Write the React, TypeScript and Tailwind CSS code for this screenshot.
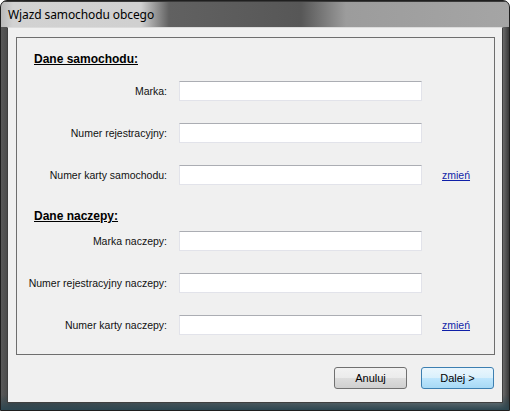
import React from 'react';

const font = "font-['Liberation_Sans',Arial,sans-serif]";

function Field({ label, link }: { label: string; link?: boolean }) {
    return (
        <div className="flex items-center h-[20px]">
            <div className="w-[150px] text-right text-[10.5px] text-[#111] leading-none whitespace-nowrap">{label}</div>
            <div className="ml-[12px] w-[243px] h-[20px] bg-white border border-[#e2e3ea] border-t-[#abadb3]" />
            {link && (
                <a href="#" className="ml-[20px] text-[10.5px] leading-none text-[#0f1fa8] underline">zmień</a>
            )}
        </div>
    );
}

export default function App() {
    return (
        <div className={`w-[510px] h-[411px] ${font} flex flex-col rounded-t-[7px] border border-[#1f1f1f] bg-[linear-gradient(to_right,#5a5a5a,#444_2%,#6a6a6a_50%,#8c8c8c_98%,#3a3a3a)] overflow-hidden`}>
            {/* Title bar */}
            <div className="h-[26px] shrink-0 flex items-center pl-[7px] bg-[linear-gradient(to_right,#b9b9b9_0px,#d2d2d2_12px,#d0d0d0_140px,#616161_168px,#575757_300px,#9c9c9c_345px,#a5a5a5_100%)] border-t border-[#3a3a3a]">
                <span className="text-[12px] text-black font-['Noto_Sans',sans-serif] leading-none mt-[1px] tracking-[-0.1px]">Wjazd samochodu obcego</span>
            </div>

            {/* Frame body */}
            <div className="flex-1 flex flex-col px-[6px] pb-[7px] bg-[linear-gradient(to_bottom,transparent,transparent_96%,#2d4650)]">
                <div className="flex-1 flex flex-col bg-[#f0f0f0] border border-[#404040] border-t-[#dcdcdc]">
                    {/* Group box */}
                    <div className="mt-[9px] ml-[8px] mr-[7px] border border-[#6e6e6e] flex flex-col pl-[17px] pt-[14px] pb-[19px]">
                        <div className="text-[12px] font-bold underline leading-[14px] text-black">Dane samochodu:</div>
                        <div className="mt-[15px] flex flex-col gap-[22px] -ml-[17px]">
                            <Field label="Marka:" />
                            <Field label="Numer rejestracyjny:" />
                            <Field label="Numer karty samochodu:" link />
                        </div>
                        <div className="mt-[24px] text-[12px] font-bold underline leading-[14px] text-black">Dane naczepy:</div>
                        <div className="mt-[8px] flex flex-col gap-[22px] -ml-[17px]">
                            <Field label="Marka naczepy:" />
                            <Field label="Numer rejestracyjny naczepy:" />
                            <Field label="Numer karty naczepy:" link />
                        </div>
                    </div>

                    {/* Buttons */}
                    <div className="mt-[12px] flex justify-end gap-[14px] pr-[8px]">
                        <button className="w-[73px] h-[22px] rounded-[3px] border border-[#707070] bg-[linear-gradient(to_bottom,#f2f2f2,#ebebeb_50%,#dddddd_51%,#cfcfcf)] text-[11px] text-black">
                            Anuluj
                        </button>
                        <button className="w-[73px] h-[22px] rounded-[3px] border border-[#3c7fb1] bg-[linear-gradient(to_bottom,#eaf6fd,#d9f0fc_50%,#bee6fd_51%,#a7d9f5)] text-[11px] text-black">
                            Dalej &gt;
                        </button>
                    </div>
                </div>
            </div>
        </div>
    );
}
